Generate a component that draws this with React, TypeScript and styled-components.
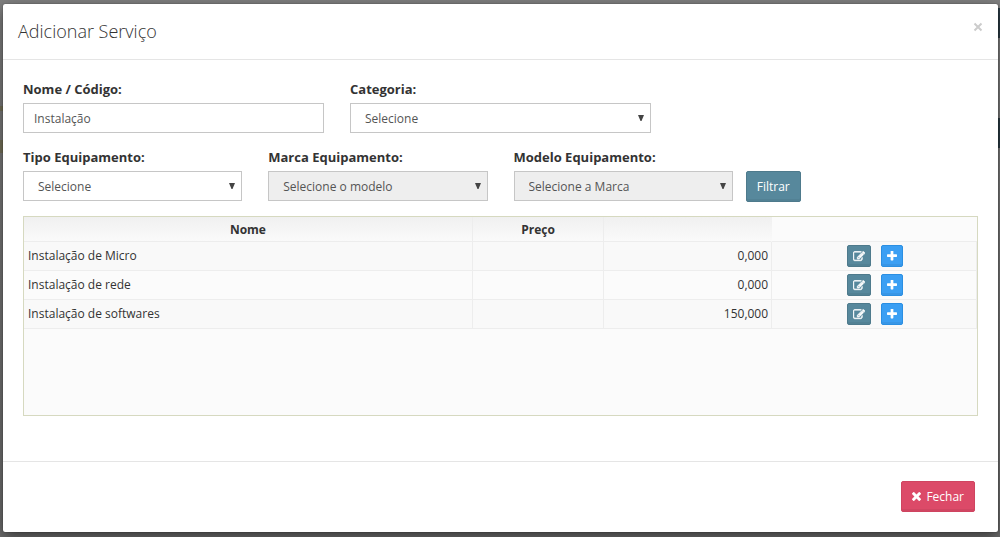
import React from "react";
import styled, { createGlobalStyle } from "styled-components";

const Global = createGlobalStyle`
  *, *::before, *::after { box-sizing: border-box; }
  body {
    margin: 0;
    background: #636363;
    font-family: "Open Sans", "Noto Sans", sans-serif;
    font-size: 13px;
    line-height: 18px;
    color: #333;
  }
`;

const Backdrop = styled.div`
  min-height: 100vh;
  padding: 4px 2px 5px 3px;
  background:
    linear-gradient(transparent 8px, #2b3b45 8px 38px, transparent 38px 118px, #2b3b45 118px 148px, transparent 148px)
      right / 2px 100% no-repeat,
    linear-gradient(transparent 106px, #77735a 106px 111px, transparent 111px 140px, #77735a 140px 153px, transparent 153px)
      left / 3px 100% no-repeat,
    linear-gradient(#808080, #6e6e6e);
`;

const Dialog = styled.div`
  background: #fff;
  border-radius: 2px;
  box-shadow: 0 5px 15px rgba(0, 0, 0, 0.5), 0 0 1px rgba(0, 0, 0, 0.8);
`;

const Header = styled.header`
  display: flex;
  justify-content: space-between;
  align-items: flex-start;
  padding: 15px;
  border-bottom: 1px solid #e5e5e5;
`;

const Title = styled.h4`
  margin: 0;
  font-size: 18px;
  line-height: 25px;
  font-weight: 300;
  color: #333;
`;

const CloseButton = styled.button`
  display: flex;
  padding: 3px 0;
  border: 0;
  background: none;
  color: #ccc;
  cursor: pointer;
`;

const Body = styled.form`
  padding: 20px 20px 45px;
`;

const Row = styled.div`
  display: grid;
  grid-template-columns: repeat(12, 1fr);
  align-items: start;
  margin: 0 -13px 15px;

  &:nth-of-type(2) { margin-bottom: 14px; }
`;

const Column = styled.div<{ $span: number }>`
  grid-column: span ${(p) => p.$span};
  min-width: 0;
  padding: 0 13px;
`;

const ActionColumn = styled.div`
  display: flex;
  grid-column: span 2;
  padding-top: 23px;
`;

const Label = styled.label`
  display: block;
  margin-bottom: 5px;
  font-weight: 700;
`;

const TextInput = styled.input`
  display: block;
  width: 100%;
  height: 30px;
  padding: 0 10px;
  border: 1px solid #c6c6c6;
  border-radius: 0;
  background: #fff;
  color: #555;
  font: inherit;
  font-size: 12px;
`;

const SelectBox = styled.div`
  display: grid;
  align-items: center;

  > * { grid-area: 1 / 1; }
`;

const SelectInput = styled.select`
  appearance: none;
  width: 100%;
  height: 30px;
  padding: 2px 24px 0 14px;
  border: 1px solid #c6c6c6;
  border-radius: 0;
  background: #fff;
  color: #555;
  font: inherit;
  font-size: 12px;

  &:disabled { background: #eee; opacity: 1; }
`;

const Caret = styled.svg`
  justify-self: end;
  margin-right: 7px;
  pointer-events: none;
`;

const tones = {
  teal: ["#57889c", "#4e7a8c"],
  blue: ["#3b9ff3", "#2b8fe2"],
  red: ["#dc4a68", "#cf4460"],
};

const Button = styled.button<{ $tone: keyof typeof tones; $small?: boolean }>`
  display: inline-flex;
  align-items: center;
  justify-content: center;
  gap: 5px;
  height: ${(p) => (p.$small ? 22 : 31)}px;
  padding: 0 ${(p) => (p.$small ? 5 : 10)}px;
  border: 1px solid ${(p) => tones[p.$tone][1]};
  border-radius: 2px;
  background: ${(p) => tones[p.$tone][0]};
  box-shadow: inset 0 -2px 0 rgba(0, 0, 0, 0.05);
  color: #fff;
  font: inherit;
  font-size: 12px;
  cursor: pointer;
`;

const Panel = styled.div`
  min-height: 200px;
  border: 1px solid #d6d9c0;
  background: #fbfbfb;
`;

const Table = styled.table`
  width: 100%;
  table-layout: fixed;
  border-collapse: separate;
  border-spacing: 0;
`;

const HeadCell = styled.th<{ $width: number }>`
  width: ${(p) => p.$width}%;
  height: 25px;
  padding: 2px 0 0;
  border-right: 1px solid #ededed;
  border-bottom: 1px solid #ededed;
  background: linear-gradient(#f0f0f0, #fafafa);
  font-size: 12px;
  font-weight: 700;

  &:nth-child(3) { border-right-color: transparent; }
`;

const EndHeadCell = styled.td`
  border-bottom: 1px solid #ededed;
`;

const BodyRow = styled.tr`
  &:nth-child(odd) { background: #f9f9f9; }
`;

const Cell = styled.td<{ $align?: string }>`
  height: 29px;
  padding: 0 3px 0 4px;
  border-right: 1px solid #ededed;
  border-bottom: 1px solid #ededed;
  text-align: ${(p) => p.$align ?? "left"};
  font-size: 12px;
`;

const Actions = styled.div`
  display: flex;
  justify-content: center;
  gap: 10px;
`;

const Footer = styled.footer`
  display: flex;
  justify-content: flex-end;
  padding: 19px 23px 20px;
  border-top: 1px solid #e5e5e5;
`;

const paths = {
  edit: "M888 1184l116-116-152-152-116 116v56h96v96h56zm440-720q-16-16-33 1l-350 350q-17 17-1 33t33-1l350-350q17-17 1-33zm80 594v190q0 119-84.5 203.5t-203.5 84.5h-832q-119 0-203.5-84.5t-84.5-203.5v-832q0-119 84.5-203.5t203.5-84.5h832q63 0 117 25 15 7 18 23 3 17-9 29l-49 49q-14 14-32 8-23-6-45-6h-832q-66 0-113 47t-47 113v832q0 66 47 113t113 47h832q66 0 113-47t47-113v-126q0-13 9-22l64-64q15-15 35-7t20 29zm-96-738l288 288-672 672h-288v-288zm444 132l-92 92-288-288 92-92q28-28 68-28t68 28l152 152q28 28 28 68t-28 68z",
  plus: "M1600 736v192q0 40-28 68t-68 28h-416v416q0 40-28 68t-68 28h-192q-40 0-68-28t-28-68v-416h-416q-40 0-68-28t-28-68v-192q0-40 28-68t68-28h416v-416q0-40 28-68t68-28h192q40 0 68 28t28 68v416h416q40 0 68 28t28 68z",
  times: "M1490 1322q0 40-28 68l-136 136q-28 28-68 28t-68-28l-294-294-294 294q-28 28-68 28t-68-28l-136-136q-28-28-28-68t28-68l294-294-294-294q-28-28-28-68t28-68l136-136q28-28 68-28t68 28l294 294 294-294q28-28 68-28t68 28l136 136q28 28 28 68t-28 68l-294 294 294 294q28 28 28 68z",
};

function Icon({ name, width = 12, height = 12 }: { name: keyof typeof paths; width?: number; height?: number }) {
  const boxes = { edit: "0 128 1792 1536", plus: "192 192 1408 1408", times: "302 366 1188 1188" };
  const strokes = { edit: 80, plus: 0, times: 0 };
  return (
    <svg
      width={width}
      height={height}
      viewBox={boxes[name]}
      fill="currentColor"
      stroke="currentColor"
      strokeWidth={strokes[name]}
      aria-hidden="true"
    >
      <path d={paths[name]} />
    </svg>
  );
}

function SelectField(props: { id: string; label: string; option: string; span: number; disabled?: boolean }) {
  return (
    <Column $span={props.span}>
      <Label htmlFor={props.id}>{props.label}</Label>
      <SelectBox>
        <SelectInput id={props.id} disabled={props.disabled}>
          <option>{props.option}</option>
        </SelectInput>
        <Caret width="6" height="6" viewBox="0 0 6 6" aria-hidden="true">
          <path d="M0 0h6L3.5 6h-1z" fill="#444" />
        </Caret>
      </SelectBox>
    </Column>
  );
}

const services = [
  { name: "Instalação de Micro", price: "0,000" },
  { name: "Instalação de rede", price: "0,000" },
  { name: "Instalação de softwares", price: "150,000" },
];

export default function App() {
  return (
    <Backdrop>
      <Global />
      <Dialog role="dialog" aria-labelledby="dialog-title">
        <Header>
          <Title id="dialog-title">Adicionar Serviço</Title>
          <CloseButton type="button" aria-label="Fechar">
            <svg width="10" height="10" viewBox="0 0 10 10" aria-hidden="true">
              <path d="M1.5 1.5l7 7m0-7l-7 7" stroke="currentColor" strokeWidth="2" />
            </svg>
          </CloseButton>
        </Header>
        <Body onSubmit={(e) => e.preventDefault()}>
          <Row>
            <Column $span={4}>
              <Label htmlFor="nome">Nome / Código:</Label>
              <TextInput id="nome" type="text" defaultValue="Instalação" />
            </Column>
            <SelectField id="categoria" label="Categoria:" option="Selecione" span={4} />
          </Row>
          <Row>
            <SelectField id="tipo" label="Tipo Equipamento:" option="Selecione" span={3} />
            <SelectField id="marca" label="Marca Equipamento:" option="Selecione o modelo" span={3} disabled />
            <SelectField id="modelo" label="Modelo Equipamento:" option="Selecione a Marca" span={3} disabled />
            <ActionColumn>
              <Button type="submit" $tone="teal">Filtrar</Button>
            </ActionColumn>
          </Row>
          <Panel>
            <Table>
              <thead>
                <tr>
                  <HeadCell scope="col" $width={47.1}>Nome</HeadCell>
                  <HeadCell scope="col" $width={13.8}>Preço</HeadCell>
                  <HeadCell $width={17.6} />
                  <EndHeadCell />
                </tr>
              </thead>
              <tbody>
                {services.map((s) => (
                  <BodyRow key={s.name}>
                    <Cell>{s.name}</Cell>
                    <Cell />
                    <Cell $align="right">{s.price}</Cell>
                    <Cell>
                      <Actions>
                        <Button type="button" $tone="teal" $small aria-label="Editar">
                          <Icon name="edit" width={12} height={11} />
                        </Button>
                        <Button type="button" $tone="blue" $small aria-label="Adicionar">
                          <Icon name="plus" width={10} height={10} />
                        </Button>
                      </Actions>
                    </Cell>
                  </BodyRow>
                ))}
              </tbody>
            </Table>
          </Panel>
        </Body>
        <Footer>
          <Button type="button" $tone="red">
            <Icon name="times" width={9} height={9} />
            Fechar
          </Button>
        </Footer>
      </Dialog>
    </Backdrop>
  );
}
